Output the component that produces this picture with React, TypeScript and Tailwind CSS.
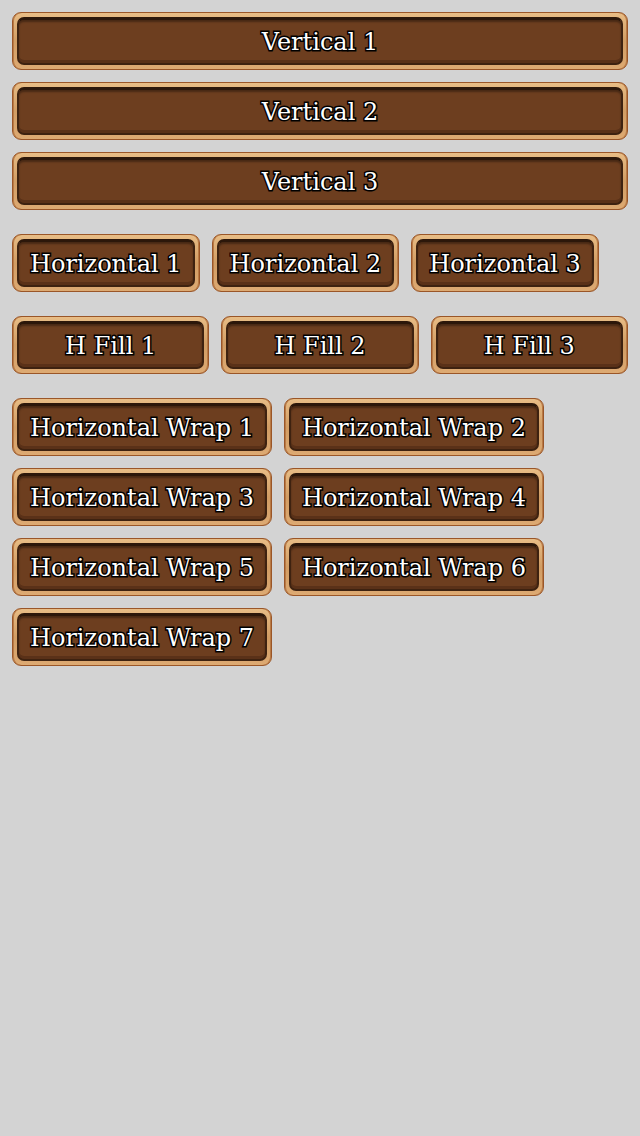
import React from 'react'

function WoodButton({ label, className = '' }: { label: string; className?: string }) {
  return (
    <button
      className={`h-[58px] rounded-[9px] border border-[#9a5628] bg-gradient-to-b from-[#e8bd86] via-[#d19d64] to-[#ddaa73] p-[4px] shadow-[inset_1px_0_0_#b97a45,inset_-1px_0_0_#b97a45] ${className}`}
    >
      <div className="flex h-full items-center justify-center rounded-[7px] border-[2px] border-[#3e2210] border-t-[3px] border-t-[#2c170a] bg-[#6d3e1f] px-[11px] shadow-[inset_0_-3px_0_#5a3118,inset_0_2px_2px_rgba(0,0,0,0.35)]">
        <span className="whitespace-nowrap text-[24px] leading-none text-white [font-family:'DejaVu_Serif',serif] [-webkit-text-stroke:3px_#000] [paint-order:stroke_fill]">
          {label}
        </span>
      </div>
    </button>
  )
}

export default function App() {
  return (
    <div className="min-h-[1136px] w-full bg-[#d3d3d3] p-3">
      <div className="flex flex-col gap-3">
        <WoodButton label="Vertical 1" className="w-full" />
        <WoodButton label="Vertical 2" className="w-full" />
        <WoodButton label="Vertical 3" className="w-full" />
      </div>

      <div className="mt-6 flex gap-3">
        <WoodButton label="Horizontal 1" />
        <WoodButton label="Horizontal 2" />
        <WoodButton label="Horizontal 3" />
      </div>

      <div className="mt-6 flex gap-3">
        <WoodButton label="H Fill 1" className="flex-1" />
        <WoodButton label="H Fill 2" className="flex-1" />
        <WoodButton label="H Fill 3" className="flex-1" />
      </div>

      <div className="mt-6 flex w-[560px] flex-wrap gap-3">
        {[1, 2, 3, 4, 5, 6, 7].map((n) => (
          <WoodButton key={n} label={`Horizontal Wrap ${n}`} />
        ))}
      </div>
    </div>
  )
}
